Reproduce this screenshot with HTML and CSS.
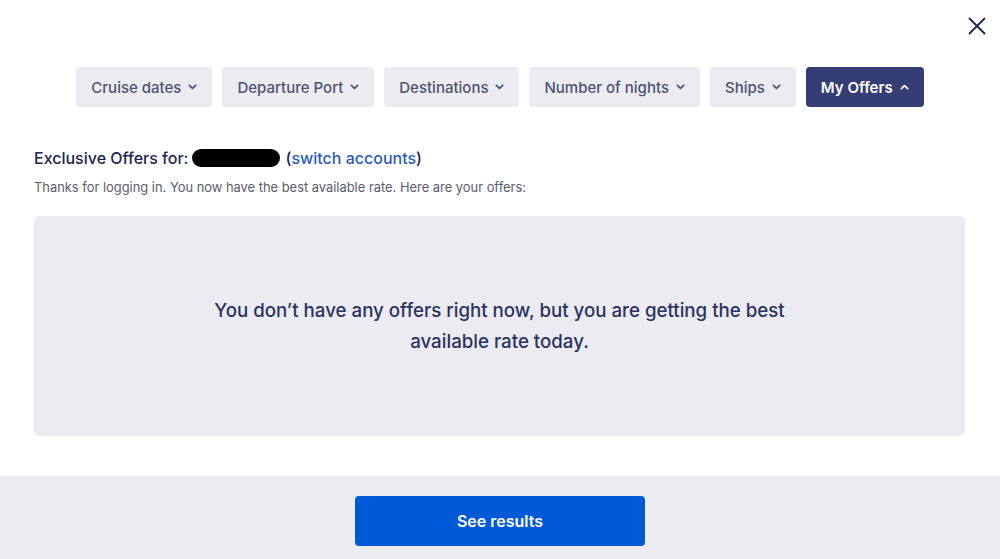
FILE: index.html
```html
<!DOCTYPE html>
<html lang="en">
<head>
<meta charset="utf-8">
<title>My Offers</title>
<link rel="stylesheet" href="styles.css">
</head>
<body>
<div class="modal">
  <div class="topbar">
    <button class="close" aria-label="Close">
      <svg width="18" height="18" viewBox="0 0 18 18"><path d="M1.5 1.5 L16.5 16.5 M16.5 1.5 L1.5 16.5" stroke="#1c2552" stroke-width="1.8" fill="none" stroke-linecap="round"/></svg>
    </button>
  </div>
  <div class="filters">
    <button class="chip">Cruise dates <svg class="chev" viewBox="0 0 10 6"><path d="M1.5 1.2 L5 4.5 L8.5 1.2" /></svg></button>
    <button class="chip">Departure Port <svg class="chev" viewBox="0 0 10 6"><path d="M1.5 1.2 L5 4.5 L8.5 1.2" /></svg></button>
    <button class="chip">Destinations <svg class="chev" viewBox="0 0 10 6"><path d="M1.5 1.2 L5 4.5 L8.5 1.2" /></svg></button>
    <button class="chip">Number of nights <svg class="chev" viewBox="0 0 10 6"><path d="M1.5 1.2 L5 4.5 L8.5 1.2" /></svg></button>
    <button class="chip">Ships <svg class="chev" viewBox="0 0 10 6"><path d="M1.5 1.2 L5 4.5 L8.5 1.2" /></svg></button>
    <button class="chip active">My Offers <svg class="chev" viewBox="0 0 10 6"><path d="M1.5 4.8 L5 1.5 L8.5 4.8" /></svg></button>
  </div>
  <div class="content">
    <h2 class="heading">Exclusive Offers for: <span class="redact"></span> <span class="paren">(</span><a class="link" href="#">switch accounts</a><span class="paren">)</span></h2>
    <p class="sub">Thanks for logging in. You now have the best available rate. Here are your offers:</p>
    <div class="empty">
      <p>You don’t have any offers right now, but you are getting the best<br>available rate today.</p>
    </div>
  </div>
  <div class="footer">
    <button class="cta">See results</button>
  </div>
</div>
</body>
</html>
```

FILE: styles.css
```css
* { box-sizing: border-box; }
html, body { margin: 0; padding: 0; background: #fff; }
body {
  font-family: "Inter", "Lato", "Liberation Sans", sans-serif;
  color: #1c2552;
  width: 1000px;
  height: 559px;
  overflow: hidden;
}
.modal { display: flex; flex-direction: column; height: 559px; }
.topbar {
  display: flex;
  justify-content: flex-end;
  height: 67px;
  padding: 17px 14px 0 0;
}
.close {
  border: 0;
  background: none;
  padding: 0;
  width: 18px;
  height: 18px;
  cursor: pointer;
}
.close svg { display: block; }
.filters {
  display: flex;
  justify-content: center;
  gap: 10px;
}
.chip {
  display: flex;
  align-items: center;
  gap: 7px;
  height: 40px;
  padding: 0 15px;
  border: 0;
  border-radius: 4px;
  background: #ebebf1;
  color: #4d5373;
  font-family: inherit;
  font-size: 15px;
  font-weight: 500;
  cursor: pointer;
}
.chev { width: 9px; height: 6px; fill: none; stroke: currentColor; stroke-width: 2; stroke-linecap: round; stroke-linejoin: round; }
.chip.active { background: #353e74; color: #fff; font-weight: 600; }
.content { padding: 0 35px 0 34px; flex: 1; }
.heading {
  margin: 40px 0 0;
  font-size: 16px;
  font-weight: 500;
  color: #1c2552;
  display: flex;
  align-items: center;
  height: 22px;
}
.redact {
  display: inline-block;
  width: 88px;
  height: 18px;
  background: #000;
  border-radius: 9px;
  margin: 0 5px 0 4px;
}
.paren { color: #1c2552; }
.link { color: #2b5cbc; text-decoration: none; }
.sub {
  margin: 11px 0 0;
  font-size: 12.9px;
  color: #5a5d6a;
  line-height: 16px;
}
.empty {
  margin-top: 20px;
  height: 220px;
  background: #ebebf1;
  border-radius: 5px;
  display: flex;
  align-items: center;
  justify-content: center;
}
.empty p {
  margin: 0;
  text-align: center;
  font-size: 18.7px;
  line-height: 31px;
  font-weight: 500;
  color: #2a3262;
}
.footer {
  height: 83px;
  background: #ececf1;
  display: flex;
  justify-content: center;
  padding-top: 20px;
}
.cta {
  width: 290px;
  height: 50px;
  border: 0;
  border-radius: 4px;
  background: #0059d6;
  color: #fff;
  font-family: inherit;
  font-size: 16px;
  font-weight: 600;
  cursor: pointer;
}
```
